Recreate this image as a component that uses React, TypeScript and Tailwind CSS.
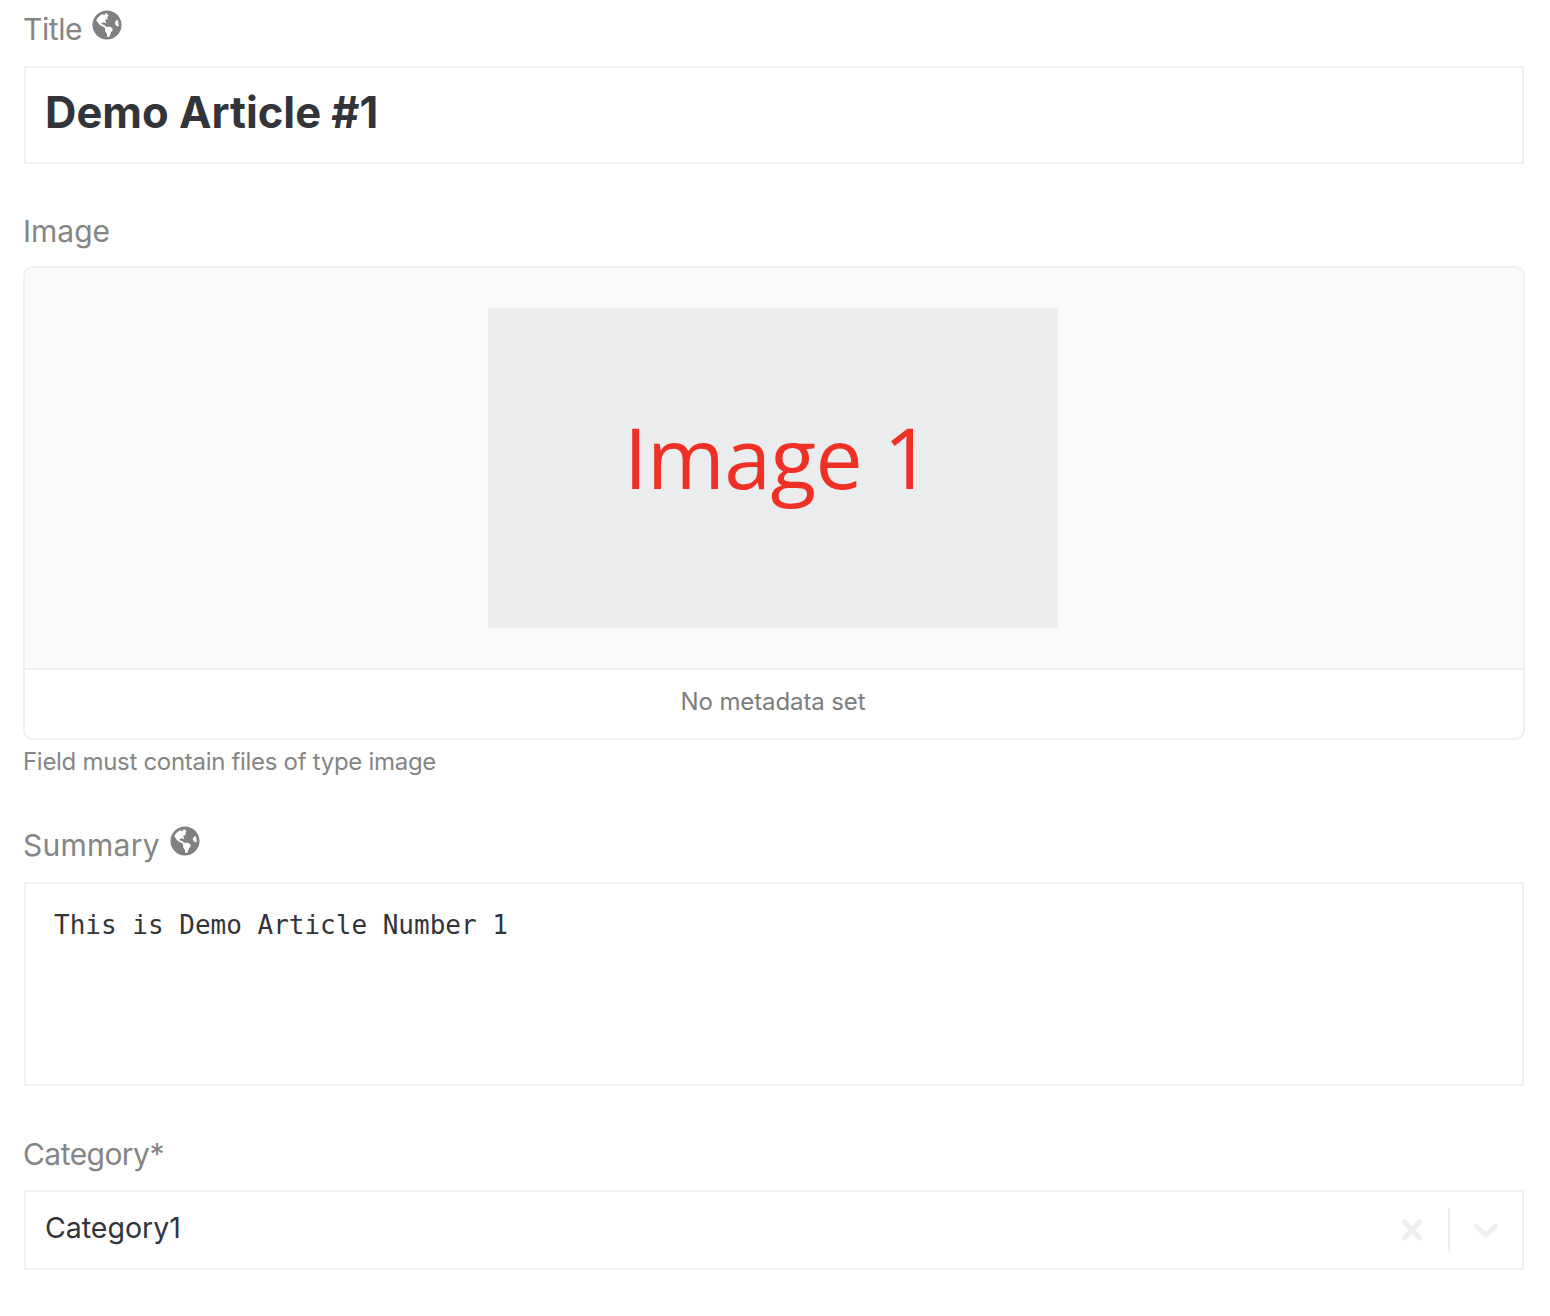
import { FaGlobeAmericas } from 'react-icons/fa'

function FieldLabel({ text, globe, tracking }: { text: string; globe?: boolean; tracking?: string }) {
  return (
    <div className="flex items-start gap-[10px] h-[40px] -ml-px text-[30px] leading-[40px] text-[#858585]">
      <span className={tracking}>{text}</span>
      {globe && <FaGlobeAmericas className="w-[30px] h-[30px] mt-[1px] text-[#808080]" />}
    </div>
  )
}

export default function App() {
  return (
    <div className="min-h-[1316px] bg-white pl-[24px] pr-[26px] pt-[9px] font-['Inter','Noto_Sans',sans-serif] text-[#32343a]">
      {/* title */}
      <FieldLabel text="Title" globe tracking="tracking-[-0.4px]" />
      <div className="mt-[17px] h-[98px] border-2 border-[#f0f0f0] pl-[20px] flex items-center">
        <span className="-ml-px text-[43.5px] font-bold leading-none mt-[-5px]">Demo Article #1</span>
      </div>

      {/* image */}
      <div className="mt-[47px]">
        <FieldLabel text="Image" />
      </div>
      <div className="mt-[15px] mx-[-1px] h-[474px] rounded-[10px] border-2 border-[#f0f0f0] overflow-hidden flex flex-col">
        <div className="h-[402px] shrink-0 bg-[#fafafa] border-b-2 border-[#f0f0f0] flex justify-center pt-[40px] pr-[2px]">
          <div className="w-[570px] h-[320px] bg-[#ebecee] flex items-center justify-center">
            <span className="text-[84px] leading-none tracking-[-0.5px] font-medium text-[#ee3124] font-['Open_Sans',sans-serif] mt-[-22px] ml-[9px]">Image 1</span>
          </div>
        </div>
        <div className="flex-1 flex items-center justify-center text-[24px] tracking-[-0.1px] text-[#7d7d7d] pb-[5px] pr-[2px]">No metadata set</div>
      </div>
      <p className="-ml-px mt-[6px] text-[24px] leading-[32px] tracking-[-0.3px] text-[#858585]">Field must contain files of type image</p>

      {/* summary */}
      <div className="mt-[47px]">
        <FieldLabel text="Summary" globe tracking="tracking-[0.25px]" />
      </div>
      <div className="mt-[17px] h-[204px] border-2 border-[#f0f0f0] pl-[28px] pt-[23px] font-['DejaVu_Sans_Mono',monospace] text-[26px] leading-[36px]">
        This is Demo Article Number 1
      </div>

      {/* category */}
      <div className="mt-[48px]">
        <FieldLabel text="Category*" tracking="tracking-[-0.55px]" />
      </div>
      <div className="mt-[16px] h-[80px] border-2 border-[#f0f0f0] pl-[20px] pr-[24px] flex items-center">
        <span className="flex-1 -ml-px text-[28.5px] mt-[-4px]">Category1</span>
        <svg width="20" height="22" viewBox="0 0 20 22" fill="none" stroke="#efefef" strokeWidth="5" strokeLinecap="round">
          <path d="M2.5 3 17.5 19M17.5 3 2.5 19" />
        </svg>
        <div className="w-[2px] h-[44px] bg-[#efefef] ml-[26px] mr-[24px]" />
        <svg width="24" height="14" viewBox="0 0 24 14" fill="none" stroke="#efefef" strokeWidth="5" strokeLinecap="round" strokeLinejoin="round" className="mt-[2px]">
          <path d="M2.5 2.5 12 11 21.5 2.5" />
        </svg>
      </div>
    </div>
  )
}
